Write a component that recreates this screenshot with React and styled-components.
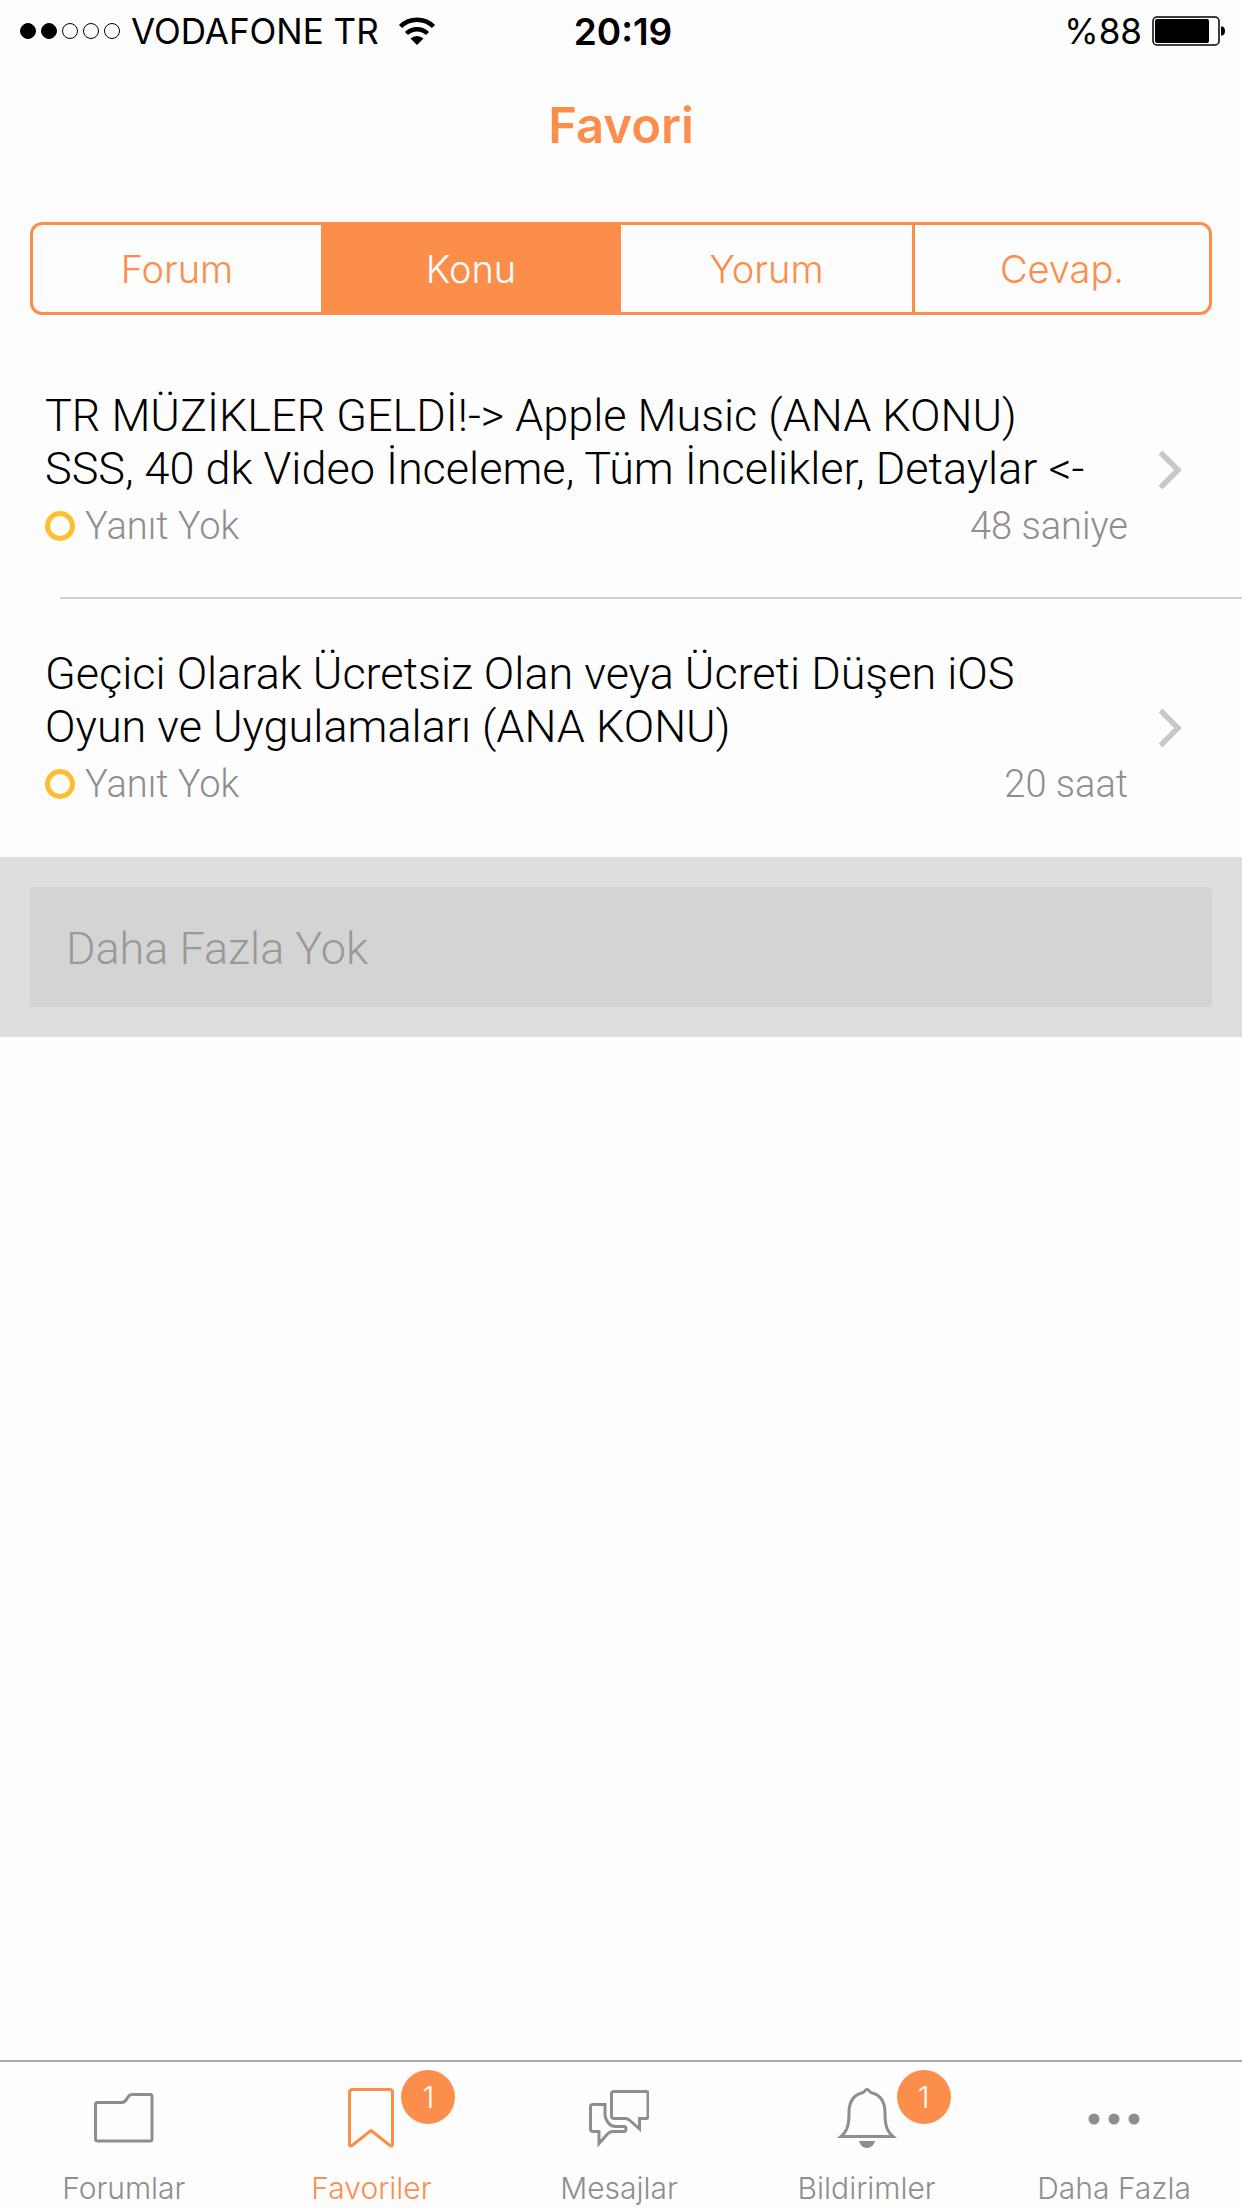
import React, { useState } from 'react'
import styled, { createGlobalStyle } from 'styled-components';

const segments = ['Forum', 'Konu', 'Yorum', 'Cevap.']

const topics = [
    {
        id: 1,
        title: 'TR MÜZİKLER GELDİ!-> Apple Music (ANA KONU)\nSSS, 40 dk Video İnceleme, Tüm İncelikler, Detaylar <-',
        reply: 'Yanıt Yok',
        time: '48 saniye',
    },
    {
        id: 2,
        title: 'Geçici Olarak Ücretsiz Olan veya Ücreti Düşen iOS\nOyun ve Uygulamaları (ANA KONU)',
        reply: 'Yanıt Yok',
        time: '20 saat',
    },
]

const tabs = [
    { name: 'Forumlar', icon: <FolderIcon /> },
    { name: 'Favoriler', icon: <BookmarkIcon />, badge: 1 },
    { name: 'Mesajlar', icon: <ChatIcon /> },
    { name: 'Bildirimler', icon: <BellIcon />, badge: 1 },
    { name: 'Daha Fazla', icon: <MoreIcon /> },
]

function FolderIcon() {
    return (
        <svg width="60" height="60" viewBox="0 0 60 60" fill="none" stroke="currentColor" strokeWidth="3" strokeLinejoin="round">
            <path d="M3.5 14.5H28c6 0 4-8 10-8h18q2 0 2 2V51q0 2-2 2H3.500q-2 0-2-2V16.500q0-2 2-2z" />
        </svg>
    )
}

function BookmarkIcon() {
    return (
        <svg width="60" height="60" viewBox="0 0 60 60" fill="none" stroke="currentColor" strokeWidth="3" strokeLinejoin="round">
            <path d="M11.500 1.500h37q3 0 3 3V56q0 3-2.500 1.500L30 42.500 11 57.500q-2.500 1.500-2.500-1.500V4.500q0-3 3-3z" />
        </svg>
    )
}

function ChatIcon() {
    return (
        <svg width="60" height="60" viewBox="0 0 60 60" fill="none" stroke="currentColor" strokeWidth="3">
            <path d="M25 3.500h32q2 0 2 2V28q0 2.500-2 2.500h-6.500V41L41 32.500q-2-2-5-2H25q-2.500 0-2.500-2.500V5.500q0-2 2.500-2z" />
            <path d="M16 16.500H4q-2.500 0-2.500 2.500v22q0 2.500 2.500 2.500h6v12l9-10q2-2 5-2h11q2 0 2-2.500 0-2.500-2-2.500H27q-5 0-8-4t-3-8z" />
        </svg>
    )
}

function BellIcon() {
    return (
        <svg width="60" height="60" viewBox="0 0 60 60" fill="none" stroke="currentColor" strokeWidth="3">
            <path d="M4 48.500c7-6 8-13 8-24C12 12 18 6.500 26 4.500 27.500 4 28 1.500 30 1.500S32.500 4 34 4.500c8 2 14 7.500 14 20 0 11 1 18 8 24z" />
            <path d="M22 53h16c-1 4-4 7-8 7s-7-3-8-7z" fill="currentColor" stroke="none" />
        </svg>
    )
}

function MoreIcon() {
    return (
        <svg width="60" height="60" viewBox="0 0 60 60" fill="currentColor">
            <circle cx="10" cy="31" r="5.500" />
            <circle cx="30" cy="31" r="5.500" />
            <circle cx="50" cy="31" r="5.500" />
        </svg>
    )
}

function WifiIcon() {
    return (
        <svg width="38" height="28" viewBox="0 0 38 28" fill="none" stroke="#000" strokeWidth="4.500">
            <path d="M2.500 9.500a23.500 23.500 0 0 1 33 0" />
            <path d="M8.500 16.500a15 15 0 0 1 21 0" />
            <path d="M12.500 21.500a9.500 9.500 0 0 1 13 0L19 28z" fill="#000" stroke="none" />
        </svg>
    )
}

function BatteryIcon() {
    return (
        <svg width="74" height="30" viewBox="0 0 74 30">
            <rect x="1" y="1" width="66" height="28" rx="4" fill="none" stroke="#000" strokeWidth="1.500" />
            <rect x="3" y="3" width="54" height="24" rx="2" />
            <path d="M69 10.500c3 0 4 2 4 4.500s-1 4.500-4 4.500z" />
        </svg>
    )
}

function Chevron() {
    return (
        <svg width="24" height="40" viewBox="0 0 24 40" fill="none" stroke="#c7c7cc" strokeWidth="5.500">
            <path d="M2.500 2.500L20 20 2.500 37.500" />
        </svg>
    )
}

function App() {
    const [segment, setSegment] = useState('Konu')

    return (
        <Page>
            <GlobalStyle />
            <StatusBar>
                <Carrier>
                    <Signal>
                        {[1, 1, 0, 0, 0].map((on, i) => <SignalDot key={i} $on={on} />)}
                    </Signal>
                    <span>VODAFONE TR</span>
                    <WifiIcon />
                </Carrier>
                <Clock>20:19</Clock>
                <Power>
                    <span>%88</span>
                    <BatteryIcon />
                </Power>
            </StatusBar>

            <Title>Favori</Title>

            <Segments>
                {segments.map((name) => (
                    <Segment key={name} type="button" $active={name === segment} onClick={() => setSegment(name)}>
                        {name}
                    </Segment>
                ))}
            </Segments>

            <TopicList>
                {topics.map((topic) => (
                    <TopicItem key={topic.id}>
                        <TopicLink href="#">
                            <TopicBody>
                                <TopicTitle>{topic.title}</TopicTitle>
                                <TopicInfo>
                                    <Ring />
                                    <span>{topic.reply}</span>
                                    <Time>{topic.time}</Time>
                                </TopicInfo>
                            </TopicBody>
                            <Chevron />
                        </TopicLink>
                    </TopicItem>
                ))}
            </TopicList>

            <Footer>
                <LoadMore type="button" disabled>Daha Fazla Yok</LoadMore>
            </Footer>

            <TabBar>
                {tabs.map((tab) => (
                    <Tab key={tab.name} href="#" $active={tab.name === 'Favoriler'}>
                        <TabIcon>
                            {tab.icon}
                            {tab.badge && <Badge>{tab.badge}</Badge>}
                        </TabIcon>
                        {tab.name}
                    </Tab>
                ))}
            </TabBar>
        </Page>
    )
}

export default App

const GlobalStyle = createGlobalStyle`
    * {
        box-sizing: border-box;
    }
    body {
        margin: 0;
        background: #fdfdfd;
        font-family: Inter, "Liberation Sans", sans-serif;
    }
    svg {
        display: block;
        flex: none;
    }
`

const Page = styled.div`
    display: flex;
    flex-direction: column;
    min-height: 100vh;
    color: #000;
`

const StatusBar = styled.header`
    display: grid;
    grid-template-columns: 1fr auto 1fr;
    align-items: center;
    height: 62px;
    padding: 0 16px 0 20px;
    font-size: 35px;
`

const Carrier = styled.div`
    display: flex;
    align-items: center;
    gap: 11px;
    span {
        margin-right: 8px;
    }
`

const Signal = styled.div`
    display: flex;
    gap: 5px;
`

const SignalDot = styled.i`
    width: 16px;
    height: 16px;
    border: 1px solid #000;
    border-radius: 50%;
    background: ${(props) => (props.$on ? '#000' : 'transparent')};
`

const Clock = styled.span`
    font-size: 37px;
    font-weight: 600;
`

const Power = styled.div`
    display: flex;
    align-items: center;
    justify-content: flex-end;
    gap: 10px;
`

const Title = styled.h1`
    margin: 0;
    padding: 30px 0 62px;
    font-size: 49px;
    line-height: 68px;
    font-weight: 600;
    text-align: center;
    color: #fb8e4b;
`

const Segments = styled.div`
    display: grid;
    grid-template-columns: 288fr 297fr 294fr 297fr;
    height: 93px;
    margin: 0 30px 26px;
    border: 3px solid #fb8e4b;
    border-radius: 12px;
    overflow: hidden;
`

const Segment = styled.button`
    padding: 0;
    border: 0;
    background: ${(props) => (props.$active ? '#fb8e4b' : 'transparent')};
    color: ${(props) => (props.$active ? '#fff' : '#fb8e4b')};
    font: 300 38px Inter, sans-serif;
    cursor: pointer;
    & + & {
        border-left: 3px solid #fb8e4b;
    }
`

const TopicList = styled.ul`
    margin: 0;
    padding: 0;
    list-style: none;
`

const TopicItem = styled.li`
    &:not(:last-child) {
        background: linear-gradient(#d0d0d2, #d0d0d2) 60px 100% / 100% 2px no-repeat;
    }
`

const TopicLink = styled.a`
    display: flex;
    align-items: center;
    height: 258px;
    padding: 0 60px 0 45px;
    color: #000;
    text-decoration: none;
    font-family: Roboto, "Liberation Sans", sans-serif;
    font-weight: 300;
`

const TopicBody = styled.div`
    flex: 1;
    min-width: 0;
    margin-right: 30px;
    padding-top: 6px;
`

const TopicTitle = styled.div`
    font-size: 45px;
    line-height: 53px;
    white-space: pre-line;
`

const TopicInfo = styled.div`
    display: flex;
    align-items: center;
    gap: 10px;
    font-size: 38px;
    line-height: 62px;
    color: #8e8e8e;
`

const Ring = styled.i`
    width: 30px;
    height: 30px;
    border: 5px solid #fdbf2f;
    border-radius: 50%;
`

const Time = styled.span`
    margin-left: auto;
`

const Footer = styled.div`
    padding: 30px;
    background: #dedede;
`

const LoadMore = styled.button`
    display: block;
    width: 100%;
    height: 120px;
    padding: 2px 36px 0;
    border: 0;
    border-radius: 4px;
    background: #d4d4d4;
    color: #999;
    font: 300 45px Roboto, "Liberation Sans", sans-serif;
    text-align: left;
`

const TabBar = styled.nav`
    display: flex;
    margin-top: auto;
    padding-right: 4px;
    border-top: 2px solid #a9a9a9;
`

const Tab = styled.a`
    flex: 1;
    display: flex;
    flex-direction: column;
    align-items: center;
    gap: 22px;
    padding: 26px 0 2px;
    font-size: 30px;
    font-weight: 300;
    line-height: 36px;
    text-decoration: none;
    color: ${(props) => (props.$active ? '#fb8e4b' : '#8e8e8e')};
`

const TabIcon = styled.span`
    position: relative;
`

const Badge = styled.span`
    position: absolute;
    top: -18px;
    left: 60px;
    width: 54px;
    height: 54px;
    border-radius: 50%;
    background: #fb8e4b;
    color: #fff;
    font-size: 30px;
    line-height: 54px;
    text-align: center;
`
